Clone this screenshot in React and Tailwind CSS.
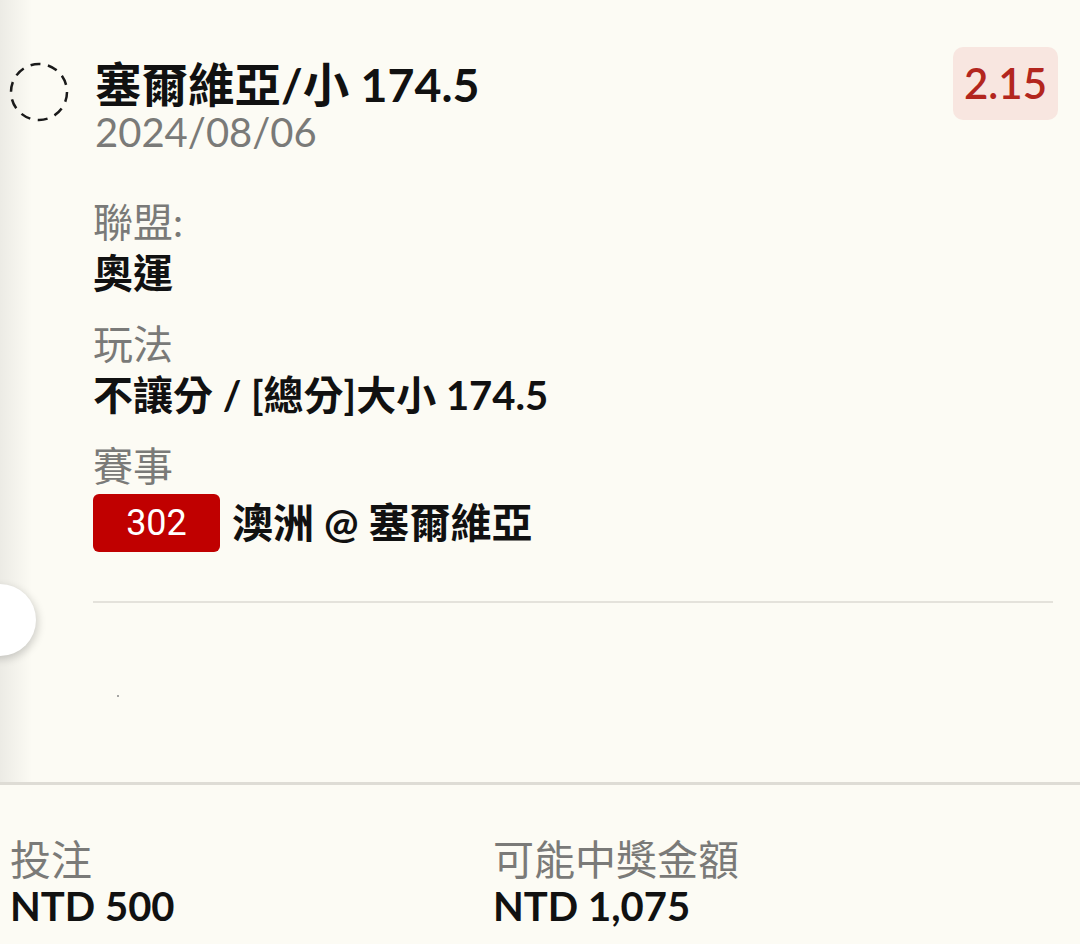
import React from "react";

const FONT = { fontFamily: "Lato, 'Noto Sans CJK TC', sans-serif" };

function Field({ label, children }) {
  return (
    <div className="flex flex-col">
      <div className="text-[40px] leading-[51px] text-[#7a7a78]">{label}</div>
      <div className="text-[40px] leading-[51px] font-bold text-[#111]">{children}</div>
    </div>
  );
}

export default function App() {
  return (
    <div className="w-[1080px] h-[944px] bg-[#fcfbf4] relative overflow-hidden" style={FONT}>
      <div className="relative h-[785px] border-b-[3px] border-[#dedcd5]">
        <div className="absolute left-0 top-0 bottom-0 w-[32px] bg-gradient-to-r from-[#ecebe5] to-[#fcfbf4]" />
        <div className="absolute left-[-36px] top-[584px] w-[72px] h-[72px] rounded-full bg-white shadow-[2px_3px_8px_rgba(0,0,0,0.18)]" />
        <div className="relative pt-[47px]">
          <div className="flex items-start pl-[8px] pr-[22px]">
            <svg width="62" height="62" viewBox="0 0 62 62" className="mt-[14px] shrink-0">
              <circle cx="31" cy="31" r="28" fill="none" stroke="#1a1a1a" strokeWidth="2.5" strokeDasharray="10 7.6" />
            </svg>
            <div className="flex-1 ml-[25px] mt-[12px]">
              <div className="text-[46.5px] leading-[50px] font-bold text-[#111]">塞爾維亞/小 174.5</div>
              <div className="text-[40px] leading-[46px] text-[#7a7a78]">2024/08/06</div>
            </div>
            <div className="shrink-0 w-[105px] h-[73px] rounded-[10px] bg-[#f8e6e0] flex items-center justify-center text-[42px] font-semibold text-[#b3261e]">
              2.15
            </div>
          </div>
          <div className="pl-[93px] pr-[27px]">
            <div className="mt-[42px] flex flex-col gap-[20px]">
              <Field label="聯盟:">奧運</Field>
              <Field label="玩法">不讓分 / [總分]大小 174.5</Field>
              <div className="flex flex-col">
                <div className="text-[40px] leading-[51px] text-[#7a7a78]">賽事</div>
                <div className="flex items-center mt-[2px]">
                  <div
                    className="w-[127px] h-[58px] rounded-[6px] bg-[#c00000] text-white text-[36px] flex items-center justify-center"
                    style={{ fontFamily: "Roboto, sans-serif" }}
                  >
                    302
                  </div>
                  <div className="ml-[12px] text-[41px] leading-[58px] font-bold text-[#111]">澳洲 @ 塞爾維亞</div>
                </div>
              </div>
            </div>
            <div className="mt-[49px] h-[2px] bg-[#e4e2db]" />
            <div className="mt-[92px] ml-[24px] w-[2px] h-[2px] rounded-full bg-[#888]" />
          </div>
        </div>
      </div>
      <div className="grid grid-cols-[483px_1fr] pl-[10px] pt-[52px]">
        <div className="flex flex-col">
          <div className="text-[41px] leading-[46px] text-[#7a7a78]">投注</div>
          <div className="text-[40px] leading-[46px] font-bold text-[#111]">NTD 500</div>
        </div>
        <div className="flex flex-col">
          <div className="text-[41px] leading-[46px] text-[#7a7a78]">可能中獎金額</div>
          <div className="text-[40px] leading-[46px] font-bold text-[#111]">NTD 1,075</div>
        </div>
      </div>
    </div>
  );
}
